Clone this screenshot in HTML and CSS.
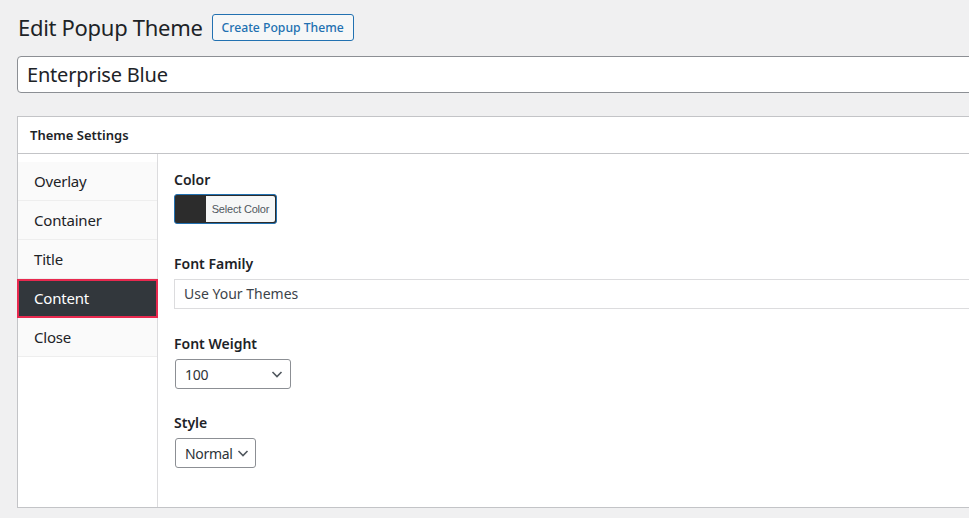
FILE: index.html
```html
<!DOCTYPE html>
<html lang="en">
<head>
    <meta charset="UTF-8">
    <title>Edit Popup Theme</title>
    <link rel="stylesheet" href="styles.css">
</head>
<body>
    <div class="wrap">
        <div class="page-head">
            <h1>Edit Popup Theme</h1>
            <a class="page-action" href="#">Create Popup Theme</a>
        </div>

        <input class="title-input" type="text" value="Enterprise Blue">

        <div class="postbox">
            <div class="postbox-header">Theme Settings</div>
            <div class="postbox-body">
                <ul class="tabs">
                    <li>Overlay</li>
                    <li>Container</li>
                    <li>Title</li>
                    <li class="active">Content</li>
                    <li>Close</li>
                </ul>

                <div class="panel">
                    <div class="field">
                        <label>Color</label>
                        <button class="color-btn" type="button">
                            <span class="swatch"></span>
                            <span class="color-text">Select Color</span>
                        </button>
                    </div>

                    <div class="field">
                        <label>Font Family</label>
                        <div class="text-box">Use Your Themes</div>
                    </div>

                    <div class="field">
                        <label>Font Weight</label>
                        <div class="select select-weight">
                            <span>100</span>
                            <svg width="14" height="14" viewBox="0 0 14 14"><path d="M2.5 5 L7 9.5 L11.5 5" fill="none" stroke="#50575e" stroke-width="1.6"/></svg>
                        </div>
                    </div>

                    <div class="field">
                        <label>Style</label>
                        <div class="select">
                            <span>Normal</span>
                            <svg width="14" height="14" viewBox="0 0 14 14"><path d="M2.5 5 L7 9.5 L11.5 5" fill="none" stroke="#50575e" stroke-width="1.6"/></svg>
                        </div>
                    </div>
                </div>
            </div>
        </div>
    </div>
</body>
</html>
```

FILE: styles.css
```css
html, body {
    margin: 0;
    overflow: hidden;
}
body {
    background: #f0f0f1;
    font-family: "Segoe UI", "Noto Sans", sans-serif;
    color: #1d2327;
    font-size: 13px;
}
.wrap {
    width: 1200px;
    padding: 12px 0 0 17px;
}
.page-head {
    display: flex;
    align-items: center;
    gap: 9px;
    height: 30px;
    padding-left: 1px;
}
h1 {
    margin: 0;
    font-size: 22px;
    font-weight: 400;
    letter-spacing: -0.3px;
    line-height: 30px;
}
.page-action {
    display: inline-block;
    height: 25px;
    line-height: 25px;
    padding: 0 9px;
    border: 1px solid #2271b1;
    border-radius: 3px;
    background: #f6f7f7;
    color: #2271b1;
    font-size: 12.2px;
    font-weight: 500;
    text-decoration: none;
    margin-top: 1px;
}
.title-input {
    display: block;
    box-sizing: border-box;
    width: 100%;
    height: 37px;
    margin-top: 14px;
    padding: 0 9px;
    border: 1px solid #8c8f94;
    border-radius: 4px;
    background: #fff;
    font-family: inherit;
    font-size: 20px;
    letter-spacing: -0.2px;
    color: #1d2327;
}
.postbox {
    margin-top: 23px;
    border: 1px solid #c3c4c7;
    background: #fff;
}
.postbox-header {
    height: 36px;
    line-height: 36px;
    padding-left: 12px;
    border-bottom: 1px solid #c3c4c7;
    font-size: 13px;
    font-weight: 600;
}
.postbox-body {
    display: flex;
    height: 353px;
}
.tabs {
    list-style: none;
    margin: 0;
    padding: 8px 0 0;
    width: 139px;
    border-right: 1px solid #dcdcde;
}
.tabs li {
    height: 38px;
    line-height: 38px;
    padding-left: 16px;
    background: #fafafa;
    border-bottom: 1px solid #eeeeee;
    font-size: 15px;
    letter-spacing: -0.2px;
}
.tabs li.active {
    margin-left: -1px;
    margin-right: -1px;
    height: 35px;
    line-height: 35px;
    padding-left: 15px;
    background: #32373c;
    border: 2px solid #e8294f;
    color: #fff;
}
.panel {
    flex: 1;
    padding: 16px 0 0 16px;
}
.field {
    margin-bottom: 30px;
}
.field label {
    display: block;
    font-size: 14px;
    font-weight: 600;
    line-height: 20px;
    margin-bottom: 4px;
}
.color-btn {
    display: flex;
    align-items: stretch;
    width: 103px;
    height: 30px;
    padding: 1px;
    border: 1px solid #2271b1;
    border-radius: 3px;
    background: #2c2c2c;
    cursor: pointer;
}
.swatch {
    width: 30px;
}
.color-text {
    flex: 1;
    background: #f6f7f7;
    border-radius: 0 2px 2px 0;
    color: #50575e;
    font-family: inherit;
    font-size: 11px;
    letter-spacing: -0.2px;
    line-height: 26px;
    text-align: center;
}
.text-box {
    box-sizing: border-box;
    height: 30px;
    line-height: 28px;
    padding-left: 9px;
    border: 1px solid #dcdcde;
    font-size: 14px;
    color: #3c434a;
}
.field:nth-child(2) {
    margin-bottom: 25px;
}
.field:nth-child(3) {
    margin-bottom: 24px;
}
.field:nth-child(2) label,
.field:nth-child(3) label,
.field:nth-child(4) label {
    margin-bottom: 5px;
}
.select {
    box-sizing: border-box;
    display: inline-flex;
    align-items: center;
    justify-content: space-between;
    gap: 3px;
    height: 30px;
    padding: 0 5px 0 9px;
    margin-left: 1px;
    border: 1px solid #8c8f94;
    border-radius: 3px;
    font-size: 14px;
    letter-spacing: -0.3px;
    color: #2c3338;
}
.select-weight {
    width: 116px;
    padding-right: 6px;
}
```
